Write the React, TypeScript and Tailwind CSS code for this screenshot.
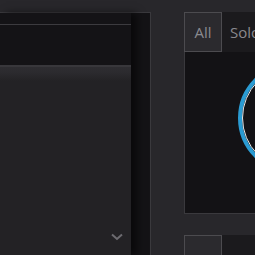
import React from 'react';

const App: React.FC = () => {
  return (
    <div
      className="flex h-[255px] w-[255px] overflow-hidden bg-[#28272b] pt-3"
      style={{ fontFamily: '"Open Sans", "Liberation Sans", sans-serif' }}
    >
      {/* left panel */}
      <div className="flex h-full w-[151px] shrink-0 border-t border-r border-[#3a393d] bg-[#141316]">
        <div className="flex w-[131px] shrink-0 flex-col pt-[11px] shadow-[6px_0_8px_rgba(0,0,0,0.55)]">
          <div className="h-[41px] border-t border-[#3c3b3f] bg-[#141316]" />
          <div className="relative flex-1 border-t-2 border-[#38373b] bg-[linear-gradient(to_bottom,#2e2d31_0px,#2b2a2e_6px,#252427_12px,#232225_14px)]">
            <svg
              className="absolute bottom-[14px] right-[8px]"
              width="12"
              height="8"
              viewBox="0 0 12 8"
              fill="none"
            >
              <path d="M1 1.5 L6 6 L11 1.5" stroke="#6c6b70" strokeWidth="2" />
            </svg>
          </div>
        </div>
      </div>

      {/* right column */}
      <div className="ml-[33px] flex w-[200px] shrink-0 flex-col">
        <div className="flex h-[41px]">
          <div className="flex w-[38px] items-center justify-center border border-[#4c4b4f] bg-[#2b2a2e] text-[15px] text-[#8a898e]">
            All
          </div>
          <div className="flex flex-1 items-center bg-[#1b1a1d] pl-[8px] text-[15px] text-[#8a898e]">
            Solo
          </div>
        </div>
        <div className="h-[165px] overflow-hidden border-b border-l border-[#3a393d] bg-[#131215] pl-[53px] pt-[10px]">
          <div className="h-[112px] w-[112px] rounded-full border-[4px] border-[#2a9bd2]">
            <div className="h-full w-full rounded-full border border-[#e8e8e8]" />
          </div>
        </div>
        <div className="h-[22px]" />
        <div className="flex h-[20px]">
          <div className="w-[38px] border-t border-r border-l border-[#4c4b4f] bg-[#2b2a2e]" />
          <div className="flex-1 bg-[#1b1a1d]" />
        </div>
      </div>
    </div>
  );
};

export default App;
